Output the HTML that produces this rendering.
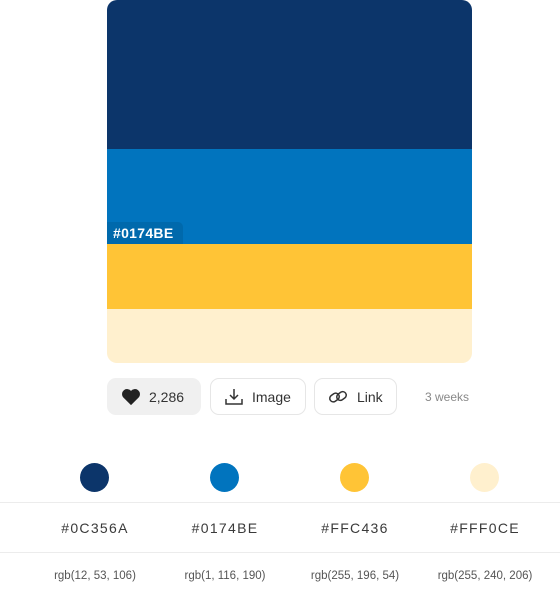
<!DOCTYPE html>
<html><head><style>
body{margin:0;width:560px;height:589px;background:#fff;font-family:"Liberation Sans",sans-serif;position:relative;overflow:hidden}
.p{position:absolute;left:107px;width:365px;top:0;height:363px;border-radius:10px;overflow:hidden}
.b{position:absolute;left:0;width:100%}
.lbl{position:absolute;left:107px;top:222px;width:76px;height:22px;background:#0069AC;color:#fff;font-weight:bold;font-size:14px;line-height:22px;padding-left:6px;box-sizing:border-box;border-top-right-radius:5px;letter-spacing:.3px}
.btn{position:absolute;top:378px;height:37px;border-radius:9px;box-sizing:border-box;font-size:14px;color:#333;display:flex;align-items:center}
.col{position:absolute;width:130px;text-align:center}
.c{position:absolute;top:463px;width:29px;height:29px;border-radius:50%}
.hr{position:absolute;left:0;width:560px;height:1px;background:#ececec}
.h{font-size:14px;letter-spacing:1.3px;color:#3a3a3a}
.r{font-size:11.5px;color:#555}
</style></head><body>
<div class="p">
<div class="b" style="top:0;height:149px;background:#0C356A"></div>
<div class="b" style="top:149px;height:95px;background:#0174BE"></div>
<div class="b" style="top:244px;height:65px;background:#FFC436"></div>
<div class="b" style="top:309px;height:54px;background:#FFF0CE"></div>
</div>
<div class="lbl">#0174BE</div>
<div class="btn" style="left:107px;width:94px;background:#f0f0f0;padding-left:14px">
<svg width="20" height="18" viewBox="0 0 24 22"><path d="M12 21 L2.5 11.5 A5.5 5.5 0 0 1 12 3.5 A5.5 5.5 0 0 1 21.5 11.5 Z" fill="#222"/></svg>
<span style="margin-left:8px">2,286</span></div>
<div class="btn" style="left:210px;width:96px;border:1px solid #e6e6e6;padding-left:13px">
<svg width="20" height="18" viewBox="0 0 20 18" fill="none" stroke="#333" stroke-width="1.5"><path d="M10 1v10M6 7l4 4 4-4M2 11v5h16v-5"/></svg>
<span style="margin-left:8px">Image</span></div>
<div class="btn" style="left:314px;width:83px;border:1px solid #e6e6e6;padding-left:13px">
<svg width="20" height="18" viewBox="0 0 20 18" fill="none" stroke="#333" stroke-width="1.5"><rect x="1.5" y="6" width="10" height="7" rx="3.5" transform="rotate(-35 6.5 9.5)"/><rect x="8.5" y="4.5" width="10" height="7" rx="3.5" transform="rotate(-35 13.5 8)"/></svg>
<span style="margin-left:9px">Link</span></div>
<div style="position:absolute;left:425px;top:390px;font-size:12px;color:#888">3 weeks</div>
<div class="c" style="left:80px;background:#0C356A"></div>
<div class="c" style="left:210px;background:#0174BE"></div>
<div class="c" style="left:340px;background:#FFC436"></div>
<div class="c" style="left:470px;background:#FFF0CE"></div>
<div class="hr" style="top:502px"></div>
<div class="hr" style="top:552px"></div>
<div class="col h" style="left:30px;top:520px">#0C356A</div>
<div class="col h" style="left:160px;top:520px">#0174BE</div>
<div class="col h" style="left:290px;top:520px">#FFC436</div>
<div class="col h" style="left:420px;top:520px">#FFF0CE</div>
<div class="col r" style="left:30px;top:570px">rgb(12, 53, 106)</div>
<div class="col r" style="left:160px;top:570px">rgb(1, 116, 190)</div>
<div class="col r" style="left:290px;top:570px">rgb(255, 196, 54)</div>
<div class="col r" style="left:420px;top:570px">rgb(255, 240, 206)</div>
</body></html>
